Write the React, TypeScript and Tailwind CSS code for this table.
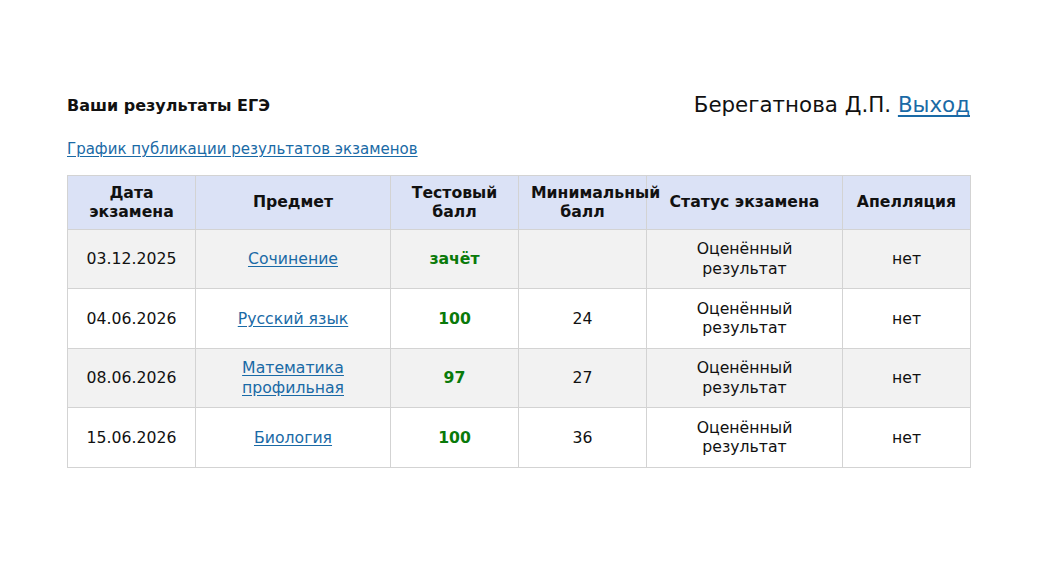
import React from 'react';

type Row = {
  date: string;
  subject: string[];
  score: string;
  min: string;
  status: string[];
  appeal: string;
};

const rows: Row[] = [
  { date: '03.12.2025', subject: ['Сочинение'], score: 'зачёт', min: '', status: ['Оценённый', 'результат'], appeal: 'нет' },
  { date: '04.06.2026', subject: ['Русский язык'], score: '100', min: '24', status: ['Оценённый', 'результат'], appeal: 'нет' },
  { date: '08.06.2026', subject: ['Математика', 'профильная'], score: '97', min: '27', status: ['Оценённый', 'результат'], appeal: 'нет' },
  { date: '15.06.2026', subject: ['Биология'], score: '100', min: '36', status: ['Оценённый', 'результат'], appeal: 'нет' },
];

const cell = 'border border-[#d3d3d3] px-[12px] text-center align-middle';

export default function App() {
  return (
    <div
      className="min-h-screen bg-white text-[#111] text-[15px] leading-[19.5px]"
      style={{ fontFamily: '"DejaVu Sans", Verdana, sans-serif' }}
    >
      <div className="w-[903px] ml-[67px] pt-[91px]">
        <div className="flex items-end justify-between">
          <h1 className="text-[16px] font-bold mb-[3px]">Ваши результаты ЕГЭ</h1>
          <div className="text-[21.4px] leading-[27px] text-[#111]">
            Берегатнова Д.П.{' '}
            <a href="#" className="text-[#1a6aa6] underline underline-offset-[3px]">Выход</a>
          </div>
        </div>

        <div className="mt-[22px]">
          <a href="#" className="text-[#1a6aa6] underline underline-offset-[2px]">
            График публикации результатов экзаменов
          </a>
        </div>

        <table className="mt-[15px] w-[903px] table-fixed border-collapse text-[15.7px] leading-[19.5px]">
          <colgroup>
            <col className="w-[128px]" />
            <col className="w-[195px]" />
            <col className="w-[128px]" />
            <col className="w-[128px]" />
            <col className="w-[196px]" />
            <col className="w-[128px]" />
          </colgroup>
          <thead>
            <tr className="bg-[#dbe2f6] h-[54px] font-bold">
              <th className={cell}>Дата<br />экзамена</th>
              <th className={cell}>Предмет</th>
              <th className={cell}>Тестовый<br />балл</th>
              <th className={cell + ' whitespace-nowrap'}>Минимальный<br />балл</th>
              <th className={cell}>Статус экзамена</th>
              <th className={cell}>Апелляция</th>
            </tr>
          </thead>
          <tbody>
            {rows.map((r, i) => (
              <tr key={i} className={(i % 2 === 0 ? 'bg-[#f2f2f2]' : 'bg-white') + ' h-[59.5px]'}>
                <td className={cell}>{r.date}</td>
                <td className={cell}>
                  <a href="#" className="text-[#1a6aa6] underline underline-offset-[2px]">
                    {r.subject.map((s, j) => (
                      <React.Fragment key={j}>
                        {j > 0 && <br />}
                        {s}
                      </React.Fragment>
                    ))}
                  </a>
                </td>
                <td className={cell + ' font-bold text-[#0a7a0a]'}>{r.score}</td>
                <td className={cell}>{r.min}</td>
                <td className={cell}>
                  {r.status[0]}
                  <br />
                  {r.status[1]}
                </td>
                <td className={cell}>{r.appeal}</td>
              </tr>
            ))}
          </tbody>
        </table>
      </div>
    </div>
  );
}
